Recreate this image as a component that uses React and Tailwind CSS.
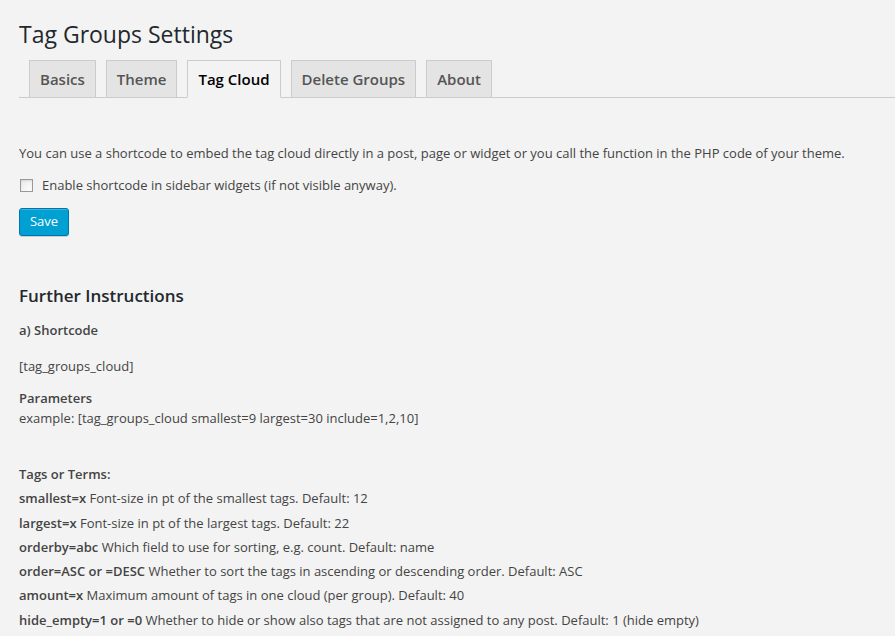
import React from "react";

const tabs = ["Basics", "Theme", "Tag Cloud", "Delete Groups", "About"];

const params = [
  ["smallest=x", "Font-size in pt of the smallest tags. Default: 12"],
  ["largest=x", "Font-size in pt of the largest tags. Default: 22"],
  ["orderby=abc", "Which field to use for sorting, e.g. count. Default: name"],
  [
    "order=ASC or =DESC",
    "Whether to sort the tags in ascending or descending order. Default: ASC",
  ],
  ["amount=x", "Maximum amount of tags in one cloud (per group). Default: 40"],
  [
    "hide_empty=1 or =0",
    "Whether to hide or show also tags that are not assigned to any post. Default: 1 (hide empty)",
  ],
];

const App = () => {
  return (
    <div
      className="min-h-[636px] bg-[#f3f3f3] pl-[19px] text-[13px] text-[#444] overflow-hidden"
      style={{ fontFamily: '"Open Sans", "Liberation Sans", sans-serif' }}
    >
      <h1 className="pt-[20px] text-[23px] leading-[29px] text-[#23282d] font-normal">
        Tag Groups Settings
      </h1>

      <div className="mt-[11px] flex border-b border-[#ccc] pl-[10px] gap-[10px]">
        {tabs.map((t) => {
          const active = t === "Tag Cloud";
          return (
            <div
              key={t}
              className={
                active
                  ? "-mb-px border border-[#ccc] border-b-[#f3f3f3] bg-[#f3f3f3] px-[10px] pt-[6px] pb-[6px] text-[15px] leading-[24px] font-semibold text-black"
                  : "border border-b-0 border-[#ccc] bg-[#e4e4e4] px-[10px] pt-[6px] pb-[6px] text-[15px] leading-[24px] font-semibold text-[#555]"
              }
            >
              {t}
            </div>
          );
        })}
      </div>

      <p className="mt-[45px] leading-[20px]">
        You can use a shortcode to embed the tag cloud directly in a post, page
        or widget or you call the function in the PHP code of your theme.
      </p>

      <label className="mt-[12px] flex items-center leading-[20px]">
        <span className="ml-[1px] h-[13px] w-[13px] border border-[#999] bg-gradient-to-br from-[#e8e8e8] to-white shadow-[inset_0_1px_2px_rgba(0,0,0,0.1)]" />
        <span className="ml-[9px]">
          Enable shortcode in sidebar widgets (if not visible anyway).
        </span>
      </label>

      <button className="mt-[13px] h-[28px] w-[50px] rounded-[3px] border border-[#0073aa] bg-[#00a0d2] text-[13px] text-white shadow-[inset_0_1px_0_rgba(120,200,230,0.5),0_1px_0_rgba(0,0,0,0.15)]">
        Save
      </button>

      <h3 className="mt-[48px] text-[17px] leading-[24px] font-semibold text-[#23282d]">
        Further Instructions
      </h3>

      <div className="mt-[12px] leading-[20px] font-semibold">a) Shortcode</div>

      <div className="mt-[16px] leading-[20px]">[tag_groups_cloud]</div>

      <div className="mt-[12px] leading-[20px]">
        <div className="font-semibold">Parameters</div>
        <div>example: [tag_groups_cloud smallest=9 largest=30 include=1,2,10]</div>
      </div>

      <div className="mt-[34px] leading-[24.3px]">
        <div className="font-semibold">Tags or Terms:</div>
        {params.map(([k, v]) => (
          <div key={k} className="whitespace-nowrap">
            <span className="font-semibold">{k}</span> {v}
          </div>
        ))}
      </div>
    </div>
  );
};

export default App;
